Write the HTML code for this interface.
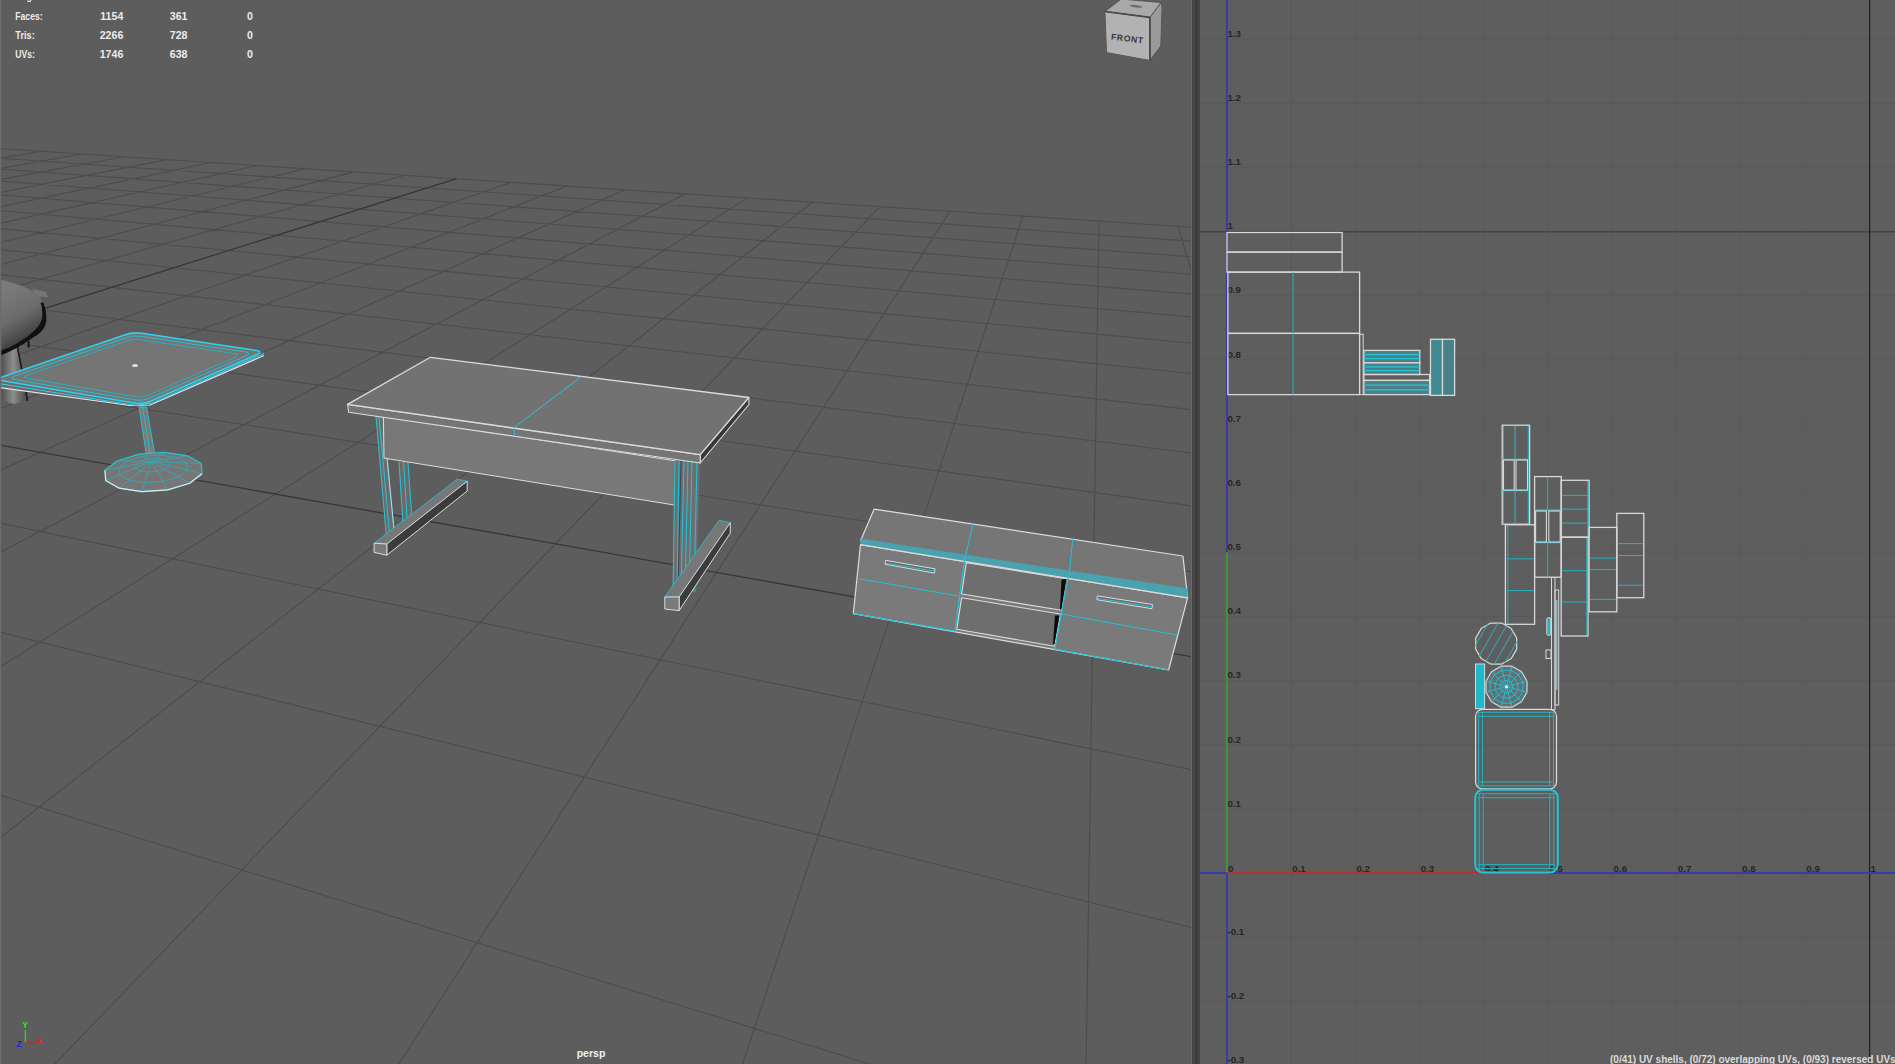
<!DOCTYPE html>
<html><head><meta charset="utf-8"><title>Maya</title>
<style>
html,body{margin:0;padding:0;width:1895px;height:1064px;overflow:hidden;background:#5d5d5d;font-family:"Liberation Sans",sans-serif;}
svg{position:absolute;left:0;top:0;display:block;font-family:"Liberation Sans",sans-serif}
</style></head><body>
<svg width="1895" height="1064" viewBox="0 0 1895 1064">
<defs><clipPath id="vp"><rect x="0" y="0" width="1191" height="1064"/></clipPath>
<clipPath id="uv"><rect x="1200" y="0" width="695" height="1064"/></clipPath></defs>
<rect x="0" y="0" width="1192" height="1064" fill="#5d5d5d"/>
<g clip-path="url(#vp)">
<path d="M-7713.5 1237.1L-73.5 143.7M-8315 1387.5L-36.3 146.2M-9079 1578.5L1.9 148.7M-10081.5 1829.2L41.4 151.3M-11454.9 2172.6L81.9 154M-13452 2671.9L123.8 156.7M-16622.1 3464.6L166.9 159.6M-22428.6 4916.4L211.4 162.5M-25348.9 5926.1L257.3 165.5M-23466 5927.2L304.7 168.7M-21583.1 5928.3L353.7 171.9M-19700.1 5929.5L404.3 175.2M-15934.3 5931.8L510.8 182.3M-14051.4 5932.9L566.9 186M-12168.5 5934L625 189.8M-10285.6 5935.2L685.3 193.8M-8402.6 5936.3L747.8 197.9M-6519.7 5937.5L812.6 202.2M-4636.8 5938.6L880 206.6M-2753.9 5939.7L950.1 211.3M-871 5940.9L1023 216.1M1012 5942L1098.9 221.1M2894.9 5943.2L1178 226.3M4777.8 5944.3L1260.5 231.8M-7713.5 1237.1L-26464.2 5925.4M-5835.6 968.4L-21671.1 5928.3M-4617.2 794L-16878 5931.2M-3762.8 671.7L-12085 5934.1M-3130.5 581.2L-7291.9 5937M-2643.7 511.5L-2498.8 5939.9M-2257.2 456.2L2294.3 5942.8M-1943.1 411.3L3379.5 3673.3M-1682.6 374L2374.9 2041.7M-1463.2 342.6L1985.4 1409.1M-1275.9 315.8L1778.5 1073.1M-1114 292.6L1650.1 864.6M-848.5 254.6L1499.4 619.9M-738.2 238.8L1451.4 541.9M-639.7 224.7L1413.8 480.8M-551.3 212.1L1383.5 431.5M-471.3 200.6L1358.6 391M-398.8 190.3L1337.7 357.2M-332.6 180.8L1320 328.4M-272.1 172.1L1304.7 303.6M-216.4 164.1L1291.5 282.1M-165.1 156.8L1279.9 263.3M-117.6 150L1269.6 246.6M-73.5 143.7L1260.5 231.8" stroke="#4c4c4c" stroke-width="1.1" fill="none"/>
<path d="M-17817.2 5930.6L456.7 178.7M-972.8 272.4L1562.8 722.7" stroke="#383838" stroke-width="1.3" fill="none"/>
<defs><linearGradient id="stg" gradientUnits="userSpaceOnUse" x1="5" y1="290" x2="38" y2="345">
<stop offset="0" stop-color="#7a7a7a"/><stop offset="0.45" stop-color="#6c6c6c"/><stop offset="0.75" stop-color="#4a4a4a"/><stop offset="1" stop-color="#1a1a1a"/></linearGradient>
<linearGradient id="stl" gradientUnits="userSpaceOnUse" x1="0" y1="0" x2="24" y2="0"><stop offset="0" stop-color="#4a4a4a"/><stop offset="0.55" stop-color="#8c8c8c"/><stop offset="1" stop-color="#555"/></linearGradient></defs>
<polygon points="0,348 18,346 28,400 14,404 0,400" fill="url(#stl)" stroke="none" stroke-width="1" stroke-linejoin="round" />
<polyline points="17.5,347 27.5,401" fill="none" stroke="#151515" stroke-width="1.5" stroke-linejoin="round" />
<polygon points="27.5,341 29.8,341 29.8,347.5 27.5,347.5" fill="#1a1a1a" stroke="none" stroke-width="1" stroke-linejoin="round" />
<polygon points="32,289 46,292 48,297.5 36,296" fill="#767676" stroke="none" stroke-width="1" stroke-linejoin="round" />
<path d="M0 279.7 C17 283 31 288.5 39 296 C44 302 46.5 310 46.3 320 C46 327 41 333 33.8 337 C24 344 12 351 0 355.4 Z" fill="url(#stg)"/>
<path d="M43 302 C46 309 46.5 314 46.3 320 C46 327 41 333 33.8 337 C24 344 12 351 0 355.4 L0 351 C12 347 24 340 31 333.5 C38 328 42 322 42.3 316 C42.5 311 42 306 40.5 303 Z" fill="#111"/>
<polygon points="-5,379.5 -5,387 142,407 264,355.5 264,351.5 143,404.5" fill="#6a6a6a" stroke="none" stroke-width="1" stroke-linejoin="round" />
<path d="M3.9 381Q-5 379.5 3.5 376.6L124.5 334.9Q133 332 141.9 333.3L255.1 350.2Q264 351.5 255.8 355.1L151.2 400.9Q143 404.5 134.1 403Z" fill="#757575" stroke="none" stroke-width="1"/>
<polyline points="-5,387 130,405.5 150,405 264,355.5" fill="none" stroke="#e4e4e4" stroke-width="1.2" stroke-linejoin="round" />
<path d="M3.9 381Q-5 379.5 3.5 376.6L124.5 334.9Q133 332 141.9 333.3L255.1 350.2Q264 351.5 255.8 355.1L151.2 400.9Q143 404.5 134.1 403Z" fill="none" stroke="#2ed2f0" stroke-width="1.6"/>
<polyline points="-5,383 136,405.5 152,403 264,353.5" fill="none" stroke="#2ed2f0" stroke-width="1" stroke-linejoin="round" />
<path d="M14.8 379.6Q7.9 378.4 14.5 376.2L126.7 337.6Q133.3 335.3 140.2 336.3L245.6 352Q252.5 353 246.1 355.8L149 398.4Q142.6 401.2 135.7 400Z" fill="none" stroke="#22c4d8" stroke-width="0.9"/>
<path d="M27.2 378.3Q21.2 377.3 26.9 375.4L127.9 340.6Q133.6 338.7 139.5 339.5L234.8 353.7Q240.7 354.6 235.2 357L147.7 395.4Q142.2 397.8 136.3 396.8Z" fill="none" stroke="#26b2c0" stroke-width="0.9"/>
<ellipse cx="135" cy="365.5" rx="3" ry="1.6" fill="#ddd"/>
<polygon points="139,407 146.5,407 156,462 147.5,462" fill="#7a7a7a" stroke="#22c4d8" stroke-width="1" stroke-linejoin="round" />
<polyline points="142.5,407 151.5,462" fill="none" stroke="#22c4d8" stroke-width="0.8" stroke-linejoin="round" />
<polygon points="202,473.7 189.7,483.3 167.7,489.9 141.9,491.7 119.2,488.2 105.7,480.4 105,470.3 117.3,460.7 139.3,454.1 165.1,452.3 187.8,455.8 201.3,463.6" fill="#767676" stroke="#22c4d8" stroke-width="1.2" stroke-linejoin="round" />
<polyline points="151.5,461.5 202,473.7" fill="none" stroke="#26b2c0" stroke-width="0.7" stroke-linejoin="round" />
<polyline points="151.5,461.5 189.7,483.3" fill="none" stroke="#26b2c0" stroke-width="0.7" stroke-linejoin="round" />
<polyline points="151.5,461.5 167.7,489.9" fill="none" stroke="#26b2c0" stroke-width="0.7" stroke-linejoin="round" />
<polyline points="151.5,461.5 141.9,491.7" fill="none" stroke="#26b2c0" stroke-width="0.7" stroke-linejoin="round" />
<polyline points="151.5,461.5 119.2,488.2" fill="none" stroke="#26b2c0" stroke-width="0.7" stroke-linejoin="round" />
<polyline points="151.5,461.5 105.7,480.4" fill="none" stroke="#26b2c0" stroke-width="0.7" stroke-linejoin="round" />
<polyline points="151.5,461.5 105,470.3" fill="none" stroke="#26b2c0" stroke-width="0.7" stroke-linejoin="round" />
<polyline points="151.5,461.5 117.3,460.7" fill="none" stroke="#26b2c0" stroke-width="0.7" stroke-linejoin="round" />
<polyline points="151.5,461.5 139.3,454.1" fill="none" stroke="#26b2c0" stroke-width="0.7" stroke-linejoin="round" />
<polyline points="151.5,461.5 165.1,452.3" fill="none" stroke="#26b2c0" stroke-width="0.7" stroke-linejoin="round" />
<polyline points="151.5,461.5 187.8,455.8" fill="none" stroke="#26b2c0" stroke-width="0.7" stroke-linejoin="round" />
<polyline points="151.5,461.5 201.3,463.6" fill="none" stroke="#26b2c0" stroke-width="0.7" stroke-linejoin="round" />
<polygon points="169.2,465.8 164.9,469.1 157.2,471.4 148.1,472.1 140.2,470.9 135.5,468.1 135.2,464.6 139.5,461.2 147.2,458.9 156.3,458.3 164.2,459.5 168.9,462.2" fill="none" stroke="#26b2c0" stroke-width="0.7" stroke-linejoin="round" />
<polygon points="186.9,470 178.3,476.8 162.9,481.4 144.8,482.6 128.9,480.2 119.4,474.7 118.9,467.7 127.5,460.9 142.9,456.3 161,455.1 176.9,457.5 186.4,463" fill="none" stroke="#26b2c0" stroke-width="0.7" stroke-linejoin="round" />
<polyline points="202,473.7 189.7,483.3 167.7,489.9 141.9,491.7 119.2,488.2 105.7,480.4 105,470.3" fill="none" stroke="#e6e6e6" stroke-width="1.2" stroke-linejoin="round" />
<polygon points="375.5,416.3 383.3,416.3 395.3,540.4 386.1,537.6" fill="#6c6c6c" stroke="none" stroke-width="1" stroke-linejoin="round" />
<polygon points="398.1,461.5 408.6,462.2 412.9,527 402.3,522.8" fill="#6a6a6a" stroke="none" stroke-width="1" stroke-linejoin="round" />
<polyline points="376,416 386.5,538" fill="none" stroke="#22c4d8" stroke-width="1" stroke-linejoin="round" />
<polyline points="379,416 390,539" fill="none" stroke="#22c4d8" stroke-width="1" stroke-linejoin="round" />
<polyline points="383,416 395,540" fill="none" stroke="#22c4d8" stroke-width="1" stroke-linejoin="round" />
<polyline points="399,462 403,523" fill="none" stroke="#22c4d8" stroke-width="1" stroke-linejoin="round" />
<polyline points="403.5,462 407.5,525" fill="none" stroke="#22c4d8" stroke-width="1" stroke-linejoin="round" />
<polyline points="408,462 412.5,527" fill="none" stroke="#22c4d8" stroke-width="1" stroke-linejoin="round" />
<polyline points="383,416 395,540" fill="none" stroke="#e0e0e0" stroke-width="0.8" stroke-linejoin="round" />
<polygon points="374.1,543.2 386.8,544 467.2,481.2 457.3,479.1" fill="#777" stroke="#22c4d8" stroke-width="0.8" stroke-linejoin="round" />
<polygon points="386.8,544 386.8,555.2 467.2,491 467.2,481.2" fill="#3c3c3c" stroke="#dcdcdc" stroke-width="1" stroke-linejoin="round" />
<polygon points="374.1,543.2 386.8,544 386.8,555.2 374.1,552.4" fill="#7a7a7a" stroke="#dcdcdc" stroke-width="1" stroke-linejoin="round" />
<polygon points="383.4,416 680.5,461.6 680.5,506 384,458.1" fill="#787878" stroke="#dcdcdc" stroke-width="1" stroke-linejoin="round" />
<polygon points="674.4,460.4 699.9,460.4 696,592.2 672.8,592.2" fill="#6e6e6e" stroke="none" stroke-width="1" stroke-linejoin="round" />
<polyline points="675,461 673,591" fill="none" stroke="#22c4d8" stroke-width="1" stroke-linejoin="round" />
<polyline points="679,461 677,591" fill="none" stroke="#22c4d8" stroke-width="1" stroke-linejoin="round" />
<polyline points="684,461 681,591" fill="none" stroke="#22c4d8" stroke-width="1" stroke-linejoin="round" />
<polyline points="688,461 685,591" fill="none" stroke="#22c4d8" stroke-width="1" stroke-linejoin="round" />
<polyline points="692,461 689,591" fill="none" stroke="#22c4d8" stroke-width="1" stroke-linejoin="round" />
<polyline points="697,461 694,591" fill="none" stroke="#22c4d8" stroke-width="1" stroke-linejoin="round" />
<polyline points="681,461 678,590" fill="none" stroke="#2a3a5a" stroke-width="0.8" stroke-linejoin="round" />
<polygon points="664.8,597 679.1,597 730.3,522.7 719.1,520.3" fill="#777" stroke="#22c4d8" stroke-width="0.8" stroke-linejoin="round" />
<polygon points="679.1,597 679.1,610.6 730.3,533.1 730.3,522.7" fill="#3c3c3c" stroke="#dcdcdc" stroke-width="1" stroke-linejoin="round" />
<polygon points="664.8,597 679.1,597 679.1,610.6 664.8,609" fill="#7a7a7a" stroke="#dcdcdc" stroke-width="1" stroke-linejoin="round" />
<polygon points="748.9,397.5 748.9,404.5 700.2,463 700.2,454.6" fill="#383838" stroke="#dcdcdc" stroke-width="1.1" stroke-linejoin="round" />
<polygon points="347.6,404.4 700.2,454.6 700.2,463 348.6,412.3" fill="#757575" stroke="#dcdcdc" stroke-width="1.1" stroke-linejoin="round" />
<polygon points="430.4,357.3 748.9,397.5 700.2,454.6 347.6,404.4" fill="#727272" stroke="#dcdcdc" stroke-width="1.3" stroke-linejoin="round" />
<polyline points="581.5,376.5 514,427.5 514.5,436" fill="none" stroke="#22c4d8" stroke-width="1" stroke-linejoin="round" />
<polygon points="860.5,544.6 1187.6,597.8 1168.6,670 853.3,613.6" fill="#7a7a7a" stroke="#dcdcdc" stroke-width="1.2" stroke-linejoin="round" />
<polygon points="874.2,509.1 1182.9,556 1187.6,596.9 860.5,540.8" fill="#767676" stroke="#dcdcdc" stroke-width="1.2" stroke-linejoin="round" />
<polygon points="860.3,538.6 1187.6,588.6 1187.6,597.8 860.5,544.6" fill="#4aa2ae" stroke="none" stroke-width="1" stroke-linejoin="round" />
<polyline points="860.5,544.6 1187.6,597.8" fill="none" stroke="#dcdcdc" stroke-width="1.2" stroke-linejoin="round" />
<polygon points="966.3,562.7 1066.1,578.8 1061.3,610.2 961.6,594" fill="#6e6e6e" stroke="#dcdcdc" stroke-width="1.1" stroke-linejoin="round" />
<polygon points="961.6,597.8 1060.4,614 1054.7,646.3 956.8,629.2" fill="#6e6e6e" stroke="#dcdcdc" stroke-width="1.1" stroke-linejoin="round" />
<polygon points="1061.5,579.5 1066.5,579 1061.5,609.5 1060,609.5" fill="#0a0a0a" stroke="none" stroke-width="1" stroke-linejoin="round" />
<polygon points="1055,615.5 1059.5,615.5 1054.5,644 1053,644" fill="#0a0a0a" stroke="none" stroke-width="1" stroke-linejoin="round" />
<polyline points="964.4,560.8 954.9,631.1" fill="none" stroke="#22c4d8" stroke-width="1.2" stroke-linejoin="round" />
<polyline points="1068,577.9 1054.7,649.1" fill="none" stroke="#22c4d8" stroke-width="1.2" stroke-linejoin="round" />
<polyline points="853.3,613.6 954.9,631.1" fill="none" stroke="#22c4d8" stroke-width="1.2" stroke-linejoin="round" />
<polyline points="1054.7,649.1 1168.6,670" fill="none" stroke="#22c4d8" stroke-width="1.2" stroke-linejoin="round" />
<polyline points="859,578.8 957.8,595.9" fill="none" stroke="#22c4d8" stroke-width="1" stroke-linejoin="round" />
<polyline points="1061.3,614 1176.2,634.9" fill="none" stroke="#22c4d8" stroke-width="1" stroke-linejoin="round" />
<polyline points="973,523.7 964.4,560.8" fill="none" stroke="#22c4d8" stroke-width="1" stroke-linejoin="round" />
<polyline points="1072.7,538.9 1068.9,577.9" fill="none" stroke="#22c4d8" stroke-width="1" stroke-linejoin="round" />
<polygon points="885.6,560.4 935,568.8 934.4,573.1 885,564.2" fill="#6a6a6a" stroke="#dcdcdc" stroke-width="1" stroke-linejoin="round" />
<polyline points="885.6,563.1 934.6,571.2" fill="none" stroke="#22c4d8" stroke-width="1" stroke-linejoin="round" />
<polygon points="1097.4,595.9 1152.5,604.5 1151.9,608.7 1096.8,599.7" fill="#6a6a6a" stroke="#dcdcdc" stroke-width="1" stroke-linejoin="round" />
<polyline points="1097.4,598.4 1152.1,606.8" fill="none" stroke="#22c4d8" stroke-width="1" stroke-linejoin="round" />
<polygon points="1149.9,17.4 1161,2.5 1162.1,7.9 1160.8,46 1149.9,60.5" fill="#9a9a9a" stroke="#555" stroke-width="1" stroke-linejoin="round" />
<polygon points="1104.9,11.5 1121.3,-1 1161,2.5 1149.9,17.4" fill="#a9a9a9" stroke="#555" stroke-width="1" stroke-linejoin="round" />
<polygon points="1104.9,11.5 1149.9,17.4 1149.9,60.5 1106.5,52.6" fill="#b2b2b2" stroke="#555" stroke-width="1" stroke-linejoin="round" />
<polyline points="1104.9,11.5 1149.9,17.4 1149.9,60.5" fill="none" stroke="#4a4a4a" stroke-width="1.6" stroke-linejoin="round" />
<text x="1127.5" y="41.5" font-size="8.6" font-weight="bold" fill="#363636" text-anchor="middle" letter-spacing="0.7" transform="rotate(7 1127 38)">FRONT</text>
<ellipse cx="1136" cy="6.2" rx="6.5" ry="1.2" fill="#707070" transform="rotate(8 1136 6)"/>
<text x="15.3" y="19.7" font-size="10.6" font-weight="bold" fill="#ececec" textLength="27.3" lengthAdjust="spacingAndGlyphs">Faces:</text>
<text x="123.3" y="19.7" font-size="10.6" font-weight="bold" fill="#ececec" text-anchor="end">1154</text>
<text x="187.5" y="19.7" font-size="10.6" font-weight="bold" fill="#ececec" text-anchor="end">361</text>
<text x="253" y="19.7" font-size="10.6" font-weight="bold" fill="#ececec" text-anchor="end">0</text>
<text x="15.3" y="38.9" font-size="10.6" font-weight="bold" fill="#ececec" textLength="19.5" lengthAdjust="spacingAndGlyphs">Tris:</text>
<text x="123.3" y="38.9" font-size="10.6" font-weight="bold" fill="#ececec" text-anchor="end">2266</text>
<text x="187.5" y="38.9" font-size="10.6" font-weight="bold" fill="#ececec" text-anchor="end">728</text>
<text x="253" y="38.9" font-size="10.6" font-weight="bold" fill="#ececec" text-anchor="end">0</text>
<text x="15.3" y="58.3" font-size="10.6" font-weight="bold" fill="#ececec" textLength="19.5" lengthAdjust="spacingAndGlyphs">UVs:</text>
<text x="123.3" y="58.3" font-size="10.6" font-weight="bold" fill="#ececec" text-anchor="end">1746</text>
<text x="187.5" y="58.3" font-size="10.6" font-weight="bold" fill="#ececec" text-anchor="end">638</text>
<text x="253" y="58.3" font-size="10.6" font-weight="bold" fill="#ececec" text-anchor="end">0</text>
<text x="15.3" y="0.2" font-size="10.6" font-weight="bold" fill="#ececec" textLength="29" lengthAdjust="spacingAndGlyphs">Edges:</text>
<text x="591" y="1057" font-size="10.5" font-weight="bold" fill="#f0f0f0" text-anchor="middle">persp</text>
<line x1="25.4" y1="1030" x2="25.4" y2="1042.5" stroke="#22dd22" stroke-width="1.3"/>
<line x1="25" y1="1042.8" x2="37" y2="1043.2" stroke="#dd2222" stroke-width="1.3"/>
<text x="22.3" y="1027.8" font-size="8.5" font-weight="bold" fill="#22ee22">Y</text>
<text x="36.5" y="1043.8" font-size="8.5" font-weight="bold" fill="#ee2222">X</text>
<text x="16.5" y="1046.8" font-size="8.5" font-weight="bold" fill="#2222ee">Z</text>
</g>
<rect x="0" y="0" width="1.3" height="1064" fill="#6c6c6c"/>
<rect x="1191" y="0" width="1.2" height="1064" fill="#6a6a6a"/><rect x="1192" y="0" width="8" height="1064" fill="#464646"/><rect x="1195.5" y="0" width="2" height="1064" fill="#3a3a3a"/>
<g clip-path="url(#uv)">
<rect x="1200" y="0" width="695" height="1064" fill="#5e5e5e"/>
<path d="M1226.9 0V1064M1291.2 0V1064M1355.4 0V1064M1419.7 0V1064M1484 0V1064M1548.2 0V1064M1612.5 0V1064M1676.8 0V1064M1741.1 0V1064M1805.3 0V1064M1869.6 0V1064M1200 1001.3H1895M1200 937.1H1895M1200 873H1895M1200 808.9H1895M1200 744.7H1895M1200 680.5H1895M1200 616.4H1895M1200 552.2H1895M1200 488.1H1895M1200 424H1895M1200 359.8H1895M1200 295.6H1895M1200 231.5H1895M1200 167.3H1895M1200 103.2H1895M1200 39H1895" stroke="#595959" stroke-width="1" fill="none"/>
<path d="M1200 231.8H1895" stroke="#444" stroke-width="1.4" fill="none"/>
<path d="M1869.6 0V1064" stroke="#1e1e1e" stroke-width="1.2" fill="none"/>
<path d="M1226.9 0V552.2M1226.9 873V1064" stroke="#3a3aa8" stroke-width="2" fill="none"/>
<path d="M1226.9 552.2V873" stroke="#3a9a3a" stroke-width="2" fill="none"/>
<path d="M1200 873H1226.9" stroke="#3a3aa8" stroke-width="2" fill="none"/>
<path d="M1226.9 873H1548" stroke="#b83232" stroke-width="1.8" fill="none"/>
<path d="M1548 873H1895" stroke="#3a3aa8" stroke-width="2" fill="none"/>
<text x="1227.9" y="871.5" font-size="9.8" font-weight="bold" fill="#262626">0</text>
<text x="1292.2" y="871.5" font-size="9.8" font-weight="bold" fill="#262626">0.1</text>
<text x="1356.4" y="871.5" font-size="9.8" font-weight="bold" fill="#262626">0.2</text>
<text x="1420.7" y="871.5" font-size="9.8" font-weight="bold" fill="#262626">0.3</text>
<text x="1485" y="871.5" font-size="9.8" font-weight="bold" fill="#262626">0.4</text>
<text x="1549.2" y="871.5" font-size="9.8" font-weight="bold" fill="#262626">0.5</text>
<text x="1613.5" y="871.5" font-size="9.8" font-weight="bold" fill="#262626">0.6</text>
<text x="1677.8" y="871.5" font-size="9.8" font-weight="bold" fill="#262626">0.7</text>
<text x="1742.1" y="871.5" font-size="9.8" font-weight="bold" fill="#262626">0.8</text>
<text x="1806.3" y="871.5" font-size="9.8" font-weight="bold" fill="#262626">0.9</text>
<text x="1870.6" y="871.5" font-size="9.8" font-weight="bold" fill="#262626">1</text>
<text x="1227.4" y="1063.2" font-size="9.8" font-weight="bold" fill="#262626">-0.3</text>
<text x="1227.4" y="999.1" font-size="9.8" font-weight="bold" fill="#262626">-0.2</text>
<text x="1227.4" y="934.9" font-size="9.8" font-weight="bold" fill="#262626">-0.1</text>
<text x="1227.4" y="806.6" font-size="9.8" font-weight="bold" fill="#262626">0.1</text>
<text x="1227.4" y="742.5" font-size="9.8" font-weight="bold" fill="#262626">0.2</text>
<text x="1227.4" y="678.3" font-size="9.8" font-weight="bold" fill="#262626">0.3</text>
<text x="1227.4" y="614.2" font-size="9.8" font-weight="bold" fill="#262626">0.4</text>
<text x="1227.4" y="550" font-size="9.8" font-weight="bold" fill="#262626">0.5</text>
<text x="1227.4" y="485.9" font-size="9.8" font-weight="bold" fill="#262626">0.6</text>
<text x="1227.4" y="421.8" font-size="9.8" font-weight="bold" fill="#262626">0.7</text>
<text x="1227.4" y="357.6" font-size="9.8" font-weight="bold" fill="#262626">0.8</text>
<text x="1227.4" y="293.4" font-size="9.8" font-weight="bold" fill="#262626">0.9</text>
<text x="1227.4" y="229.3" font-size="9.8" font-weight="bold" fill="#262626">1</text>
<text x="1227.4" y="165.1" font-size="9.8" font-weight="bold" fill="#262626">1.1</text>
<text x="1227.4" y="101" font-size="9.8" font-weight="bold" fill="#262626">1.2</text>
<text x="1227.4" y="36.8" font-size="9.8" font-weight="bold" fill="#262626">1.3</text>
<rect x="1227" y="232.5" width="115.1" height="19.6" fill="none" stroke="#d8d8d8" stroke-width="1.3"/>
<rect x="1227" y="252.1" width="115.1" height="20" fill="none" stroke="#d8d8d8" stroke-width="1.3"/>
<rect x="1227.9" y="272.1" width="131.7" height="61.3" fill="none" stroke="#d8d8d8" stroke-width="1.3"/>
<rect x="1227.9" y="333.4" width="131.7" height="61.2" fill="none" stroke="#d8d8d8" stroke-width="1.3"/>
<path d="M1293 272V394.6" stroke="#26b2c0" stroke-width="1"/>
<rect x="1359.6" y="334.3" width="3.6" height="60.3" fill="none" stroke="#d8d8d8" stroke-width="1"/>
<rect x="1363.9" y="350.4" width="55.9" height="12.5" fill="#4d7f86" stroke="#d8d8d8" stroke-width="1.3"/>
<path d="M1363.9 354.6H1419.8" stroke="#22c4d8" stroke-width="1.2"/>
<path d="M1363.9 358.7H1419.8" stroke="#22c4d8" stroke-width="1.2"/>
<rect x="1363.9" y="362.9" width="55.9" height="11.6" fill="#4d7f86" stroke="#d8d8d8" stroke-width="1.3"/>
<path d="M1363.9 366.8H1419.8" stroke="#22c4d8" stroke-width="1.2"/>
<path d="M1363.9 370.6H1419.8" stroke="#22c4d8" stroke-width="1.2"/>
<rect x="1363.9" y="374.5" width="65.7" height="5.9" fill="none" stroke="#d8d8d8" stroke-width="1.3"/>
<rect x="1363.9" y="380.4" width="65.7" height="14.2" fill="#4d7f86" stroke="#d8d8d8" stroke-width="1.3"/>
<path d="M1363.9 385.1H1429.6" stroke="#22c4d8" stroke-width="1.2"/>
<path d="M1363.9 389.9H1429.6" stroke="#22c4d8" stroke-width="1.2"/>
<rect x="1430.5" y="339.3" width="12" height="56.1" fill="#3f8a90" stroke="#d8d8d8" stroke-width="1.3"/>
<rect x="1442.5" y="339.3" width="12.1" height="56.1" fill="#468288" stroke="#d8d8d8" stroke-width="1.3"/>
<rect x="1502.2" y="425.2" width="27.4" height="99" fill="none" stroke="#d8d8d8" stroke-width="1.3"/>
<path d="M1503.5 426V459M1503.5 491V523.5M1528.3 426V523.5M1515.1 426V459M1515.1 491V523.5" stroke="#26b2c0" stroke-width="1.1"/>
<path d="M1502.2 459.3H1527.5M1502.2 490.7H1527.5" stroke="#22c4d8" stroke-width="1.3"/>
<rect x="1503.5" y="460" width="10.7" height="30" fill="none" stroke="#d8d8d8" stroke-width="1.1"/>
<rect x="1516" y="460" width="11.5" height="30" fill="none" stroke="#d8d8d8" stroke-width="1.1"/>
<rect x="1505.4" y="524.8" width="29.2" height="99.5" fill="none" stroke="#d8d8d8" stroke-width="1.3"/>
<path d="M1506.4 558.8H1533.6" stroke="#26b2c0" stroke-width="1"/>
<path d="M1506.4 590.6H1533.6" stroke="#26b2c0" stroke-width="1"/>
<path d="M1507.8 525.8V623.3" stroke="#26b2c0" stroke-width="1"/>
<rect x="1534.6" y="476.6" width="26.6" height="100.6" fill="none" stroke="#d8d8d8" stroke-width="1.3"/>
<path d="M1547.6 477.5V510M1547.6 543V576.5" stroke="#26b2c0" stroke-width="1.1"/>
<path d="M1535.5 510.1H1560.3M1535.5 542.6H1560.3" stroke="#22c4d8" stroke-width="1.2"/>
<rect x="1535.6" y="511" width="10.8" height="31" fill="none" stroke="#d8d8d8" stroke-width="1.1"/>
<rect x="1548.8" y="511" width="11.4" height="31" fill="none" stroke="#d8d8d8" stroke-width="1.1"/>
<rect x="1561.2" y="480.3" width="27.9" height="56.9" fill="none" stroke="#d8d8d8" stroke-width="1.3"/>
<path d="M1562.2 495.4H1588.1" stroke="#26b2c0" stroke-width="1"/>
<path d="M1562.2 509.1H1588.1" stroke="#26b2c0" stroke-width="1"/>
<path d="M1562.2 523.1H1588.1" stroke="#26b2c0" stroke-width="1"/>
<path d="M1588 481V536" stroke="#22c4d8" stroke-width="1.2"/>
<rect x="1561.2" y="537.2" width="26.8" height="98.8" fill="none" stroke="#d8d8d8" stroke-width="1.3"/>
<path d="M1562.2 570.7H1587" stroke="#26b2c0" stroke-width="1"/>
<path d="M1562.2 602H1587" stroke="#26b2c0" stroke-width="1"/>
<path d="M1587 538V635" stroke="#22c4d8" stroke-width="1.2"/>
<rect x="1589.1" y="527.4" width="27.7" height="84.4" fill="none" stroke="#d8d8d8" stroke-width="1.3"/>
<path d="M1590.1 558.1H1615.8" stroke="#26b2c0" stroke-width="1"/>
<path d="M1590.1 569.6H1615.8" stroke="#26b2c0" stroke-width="1"/>
<path d="M1590.1 599.4H1615.8" stroke="#26b2c0" stroke-width="1"/>
<rect x="1616.8" y="513.4" width="27" height="84.3" fill="none" stroke="#d8d8d8" stroke-width="1.3"/>
<path d="M1617.8 543.6H1642.8" stroke="#26b2c0" stroke-width="1"/>
<path d="M1617.8 555.5H1642.8" stroke="#26b2c0" stroke-width="1"/>
<path d="M1617.8 585.2H1642.8" stroke="#26b2c0" stroke-width="1"/>
<rect x="1551.5" y="577.5" width="3.5" height="132.2" fill="none" stroke="#d8d8d8" stroke-width="1"/>
<rect x="1555" y="590" width="3.7" height="115" fill="none" stroke="#d8d8d8" stroke-width="1"/>
<path d="M1556.8 600V690" stroke="#a8d8e0" stroke-width="1"/>
<rect x="1546.8" y="617.5" width="4" height="18" rx="2" fill="#26b2c0" stroke="#d8d8d8" stroke-width="1"/>
<rect x="1546" y="650" width="5" height="8.5" fill="none" stroke="#d8d8d8" stroke-width="1"/>
<polygon points="1516.7,649.1 1511.2,658.6 1501.7,664.1 1490.7,664.1 1481.2,658.6 1475.7,649.1 1475.7,638.1 1481.2,628.6 1490.7,623.1 1501.7,623.1 1511.2,628.6 1516.7,638.1" fill="none" stroke="#d8d8d8" stroke-width="1.2" stroke-linejoin="round" />
<polyline points="1475.3,645.8 1487.6,624.4" fill="none" stroke="#26b2c0" stroke-width="1" stroke-linejoin="round" />
<polyline points="1479.2,656 1498.4,622.7" fill="none" stroke="#26b2c0" stroke-width="1" stroke-linejoin="round" />
<polyline points="1485.7,661.8 1506.7,625.4" fill="none" stroke="#26b2c0" stroke-width="1" stroke-linejoin="round" />
<polyline points="1494,664.5 1513.2,631.2" fill="none" stroke="#26b2c0" stroke-width="1" stroke-linejoin="round" />
<polyline points="1504.8,662.8 1517.1,641.4" fill="none" stroke="#26b2c0" stroke-width="1" stroke-linejoin="round" />
<polygon points="1527,692.2 1521.5,701.7 1512,707.2 1501,707.2 1491.5,701.7 1486,692.2 1486,681.2 1491.5,671.7 1501,666.2 1512,666.2 1521.5,671.7 1527,681.2" fill="#607074" stroke="#d8d8d8" stroke-width="1.2" stroke-linejoin="round" />
<polyline points="1506.5,686.7 1527,692.2" fill="none" stroke="#22c4d8" stroke-width="0.9" stroke-linejoin="round" />
<polyline points="1506.5,686.7 1521.5,701.7" fill="none" stroke="#22c4d8" stroke-width="0.9" stroke-linejoin="round" />
<polyline points="1506.5,686.7 1512,707.2" fill="none" stroke="#22c4d8" stroke-width="0.9" stroke-linejoin="round" />
<polyline points="1506.5,686.7 1501,707.2" fill="none" stroke="#22c4d8" stroke-width="0.9" stroke-linejoin="round" />
<polyline points="1506.5,686.7 1491.5,701.7" fill="none" stroke="#22c4d8" stroke-width="0.9" stroke-linejoin="round" />
<polyline points="1506.5,686.7 1486,692.2" fill="none" stroke="#22c4d8" stroke-width="0.9" stroke-linejoin="round" />
<polyline points="1506.5,686.7 1486,681.2" fill="none" stroke="#22c4d8" stroke-width="0.9" stroke-linejoin="round" />
<polyline points="1506.5,686.7 1491.5,671.7" fill="none" stroke="#22c4d8" stroke-width="0.9" stroke-linejoin="round" />
<polyline points="1506.5,686.7 1501,666.2" fill="none" stroke="#22c4d8" stroke-width="0.9" stroke-linejoin="round" />
<polyline points="1506.5,686.7 1512,666.2" fill="none" stroke="#22c4d8" stroke-width="0.9" stroke-linejoin="round" />
<polyline points="1506.5,686.7 1521.5,671.7" fill="none" stroke="#22c4d8" stroke-width="0.9" stroke-linejoin="round" />
<polyline points="1506.5,686.7 1527,681.2" fill="none" stroke="#22c4d8" stroke-width="0.9" stroke-linejoin="round" />
<polygon points="1512.6,688.3 1511,691.2 1508.1,692.8 1504.9,692.8 1502,691.2 1500.4,688.3 1500.4,685.1 1502,682.2 1504.9,680.6 1508.1,680.6 1511,682.2 1512.6,685.1" fill="none" stroke="#22c4d8" stroke-width="0.9" stroke-linejoin="round" />
<polygon points="1517.8,689.7 1514.7,694.9 1509.5,698 1503.5,698 1498.3,694.9 1495.2,689.7 1495.2,683.7 1498.3,678.5 1503.5,675.4 1509.5,675.4 1514.7,678.5 1517.8,683.7" fill="none" stroke="#22c4d8" stroke-width="0.9" stroke-linejoin="round" />
<polygon points="1522.9,691.1 1518.5,698.7 1510.9,703.1 1502.1,703.1 1494.5,698.7 1490.1,691.1 1490.1,682.3 1494.5,674.7 1502.1,670.3 1510.9,670.3 1518.5,674.7 1522.9,682.3" fill="none" stroke="#22c4d8" stroke-width="0.9" stroke-linejoin="round" />
<circle cx="1506.5" cy="686.7" r="1.5" fill="#eee"/>
<rect x="1475.5" y="664" width="9.1" height="44.7" fill="#22b8cc" stroke="#d8d8d8" stroke-width="1"/>
<rect x="1475.6" y="709.3" width="80.9" height="79.6" rx="7" fill="none" stroke="#d8d8d8" stroke-width="1.3"/>
<path d="M1478.6 712V786M1553.5 712V786M1478 712.3H1554M1478 785.9H1554" stroke="#26b2c0" stroke-width="1"/>
<path d="M1482.6 712V786M1549.5 712V786M1478 716.3H1554M1478 781.9H1554" stroke="#26b2c0" stroke-width="1"/>
<rect x="1475.2" y="789.7" width="82.6" height="82.9" rx="8" fill="none" stroke="#22c4d8" stroke-width="2"/>
<path d="M1479.2 793V870M1553.8 793V870M1478 793.7H1555M1478 868.6H1555" stroke="#26b2c0" stroke-width="1"/>
<path d="M1483.2 793V870M1549.8 793V870M1478 797.7H1555M1478 864.6H1555" stroke="#26b2c0" stroke-width="1"/>
<text x="1610" y="1063" font-size="10" font-weight="bold" fill="#dcdcdc">(0/41) UV shells, (0/72) overlapping UVs, (0/93) reversed UVs</text>
</g>
</svg>
</body></html>
